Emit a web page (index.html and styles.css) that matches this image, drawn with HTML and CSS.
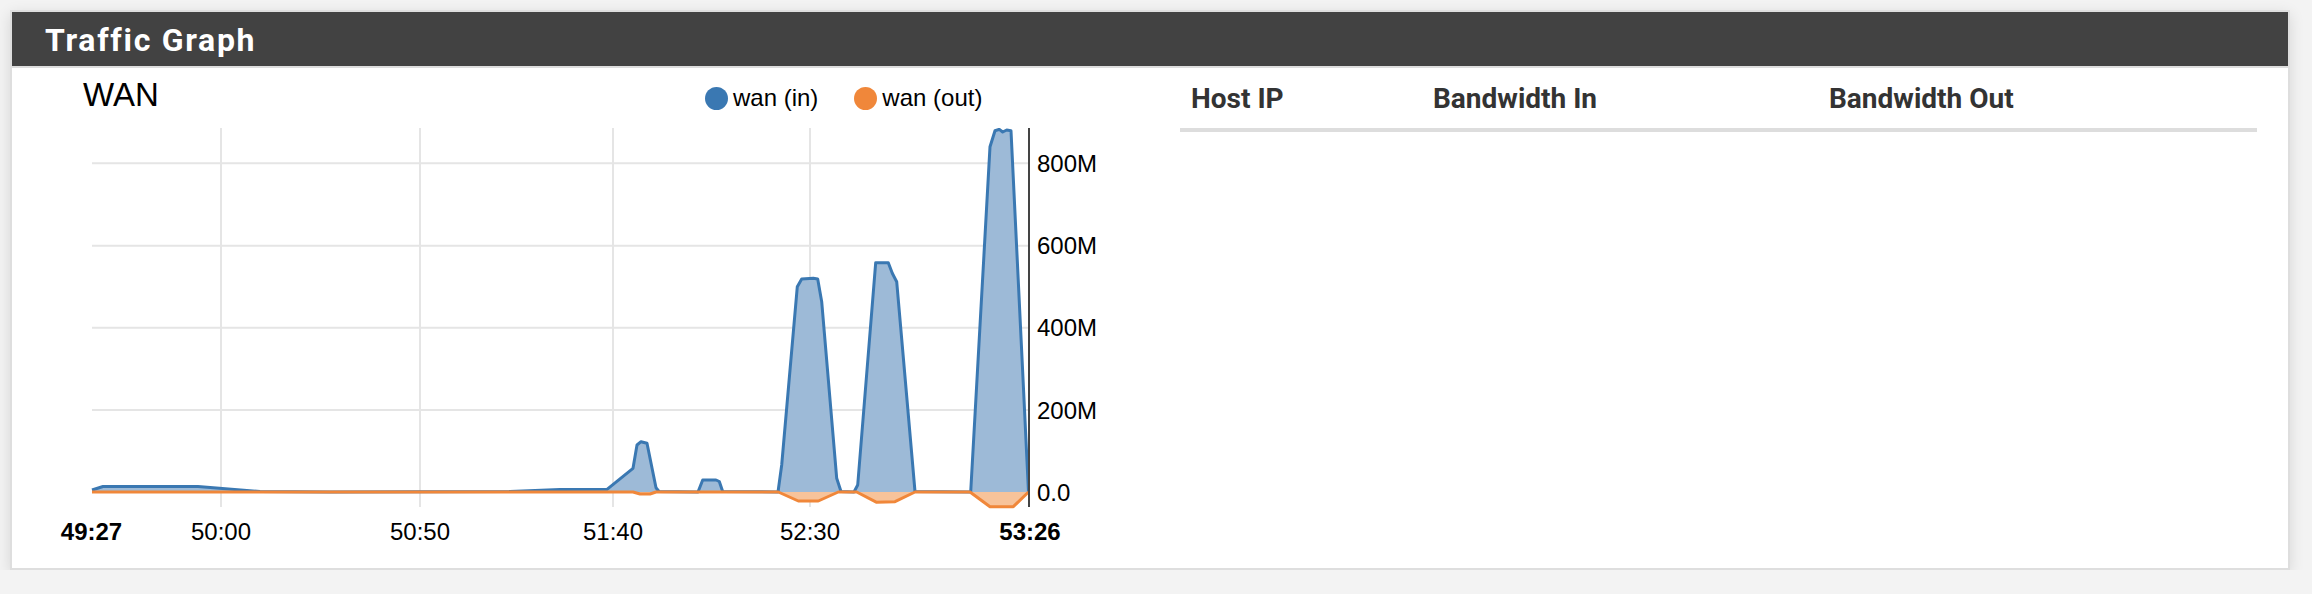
FILE: index.html
```html
<!DOCTYPE html>
<html lang="en">
<head>
<meta charset="utf-8">
<title>Traffic Graph</title>
<link rel="stylesheet" href="styles.css">
</head>
<body>
<div class="panel">
  <div class="panel-heading">
    <h2 class="panel-title">Traffic Graph</h2>
  </div>
  <div class="panel-body">
    <div class="chart-col">
      <div class="chart-head">
        <div class="chart-title">WAN</div>
        <div class="legend">
          <span class="legend-item"><span class="dot dot-in"></span>wan (in)</span>
          <span class="legend-item"><span class="dot dot-out"></span>wan (out)</span>
        </div>
      </div>
      <svg class="chart" width="1168" height="440" viewBox="12 128 1168 440" xmlns="http://www.w3.org/2000/svg">
        <g class="grid">
          <line x1="221" y1="128" x2="221" y2="507"/>
          <line x1="420" y1="128" x2="420" y2="507"/>
          <line x1="613" y1="128" x2="613" y2="507"/>
          <line x1="810" y1="128" x2="810" y2="507"/>
          <line x1="92" y1="163.3" x2="1029" y2="163.3"/>
          <line x1="92" y1="245.7" x2="1029" y2="245.7"/>
          <line x1="92" y1="327.7" x2="1029" y2="327.7"/>
          <line x1="92" y1="410" x2="1029" y2="410"/>
        </g>
        <path class="area-in" d="M92,492 L92,490 L103,486.5 L198,486.5 L260,491.5 L330,492 L510,491.5 L560,489.5 L607,489.3 L633,468.3 L637,445 L641,441.7 L647,443.3 L656,487.7 L659,491.5 L698,492 L702.7,480 L716,480 L719.3,481.5 L722.7,491.5 L778,492 L781.7,465 L797.3,286.7 L801.7,279 L813.3,278.3 L817.7,279 L821.7,301.7 L836.7,478.3 L841,491.5 L854,492 L857.7,485 L875.7,262.7 L888.3,262.7 L892.3,273.3 L896.7,281.7 L915,491.5 L970.7,492 L990,146.7 L995,130.7 L999.3,129.3 L1002.7,132 L1006.7,130 L1011,130.7 L1028.5,492 Z"/>
        <path class="line-in" d="M92,490 L103,486.5 L198,486.5 L260,491.5 L330,492 L510,491.5 L560,489.5 L607,489.3 L633,468.3 L637,445 L641,441.7 L647,443.3 L656,487.7 L659,491.5 L698,492 L702.7,480 L716,480 L719.3,481.5 L722.7,491.5 L778,492 L781.7,465 L797.3,286.7 L801.7,279 L813.3,278.3 L817.7,279 L821.7,301.7 L836.7,478.3 L841,491.5 L854,492 L857.7,485 L875.7,262.7 L888.3,262.7 L892.3,273.3 L896.7,281.7 L915,491.5 L970.7,492 L990,146.7 L995,130.7 L999.3,129.3 L1002.7,132 L1006.7,130 L1011,130.7 L1028.5,492"/>
        <path class="area-out" d="M92,492 L633,492 L640,494 L650,494 L656,492 L778.3,492 L798.3,501 L818.3,501 L838.3,492 L856.7,492 L876.7,502.3 L895,501.7 L915,492 L970,492 L990,506.7 L1013.3,506.7 L1028.5,492 Z"/>
        <path class="line-out" d="M92,492 L633,492 L640,494 L650,494 L656,492 L778.3,492 L798.3,501 L818.3,501 L838.3,492 L856.7,492 L876.7,502.3 L895,501.7 L915,492 L970,492 L990,506.7 L1013.3,506.7 L1028.5,492"/>
        <line class="axis" x1="1029" y1="128" x2="1029" y2="507"/>
        <g class="ticks">
          <text x="1037" y="171.9">800M</text>
          <text x="1037" y="254.3">600M</text>
          <text x="1037" y="336.3">400M</text>
          <text x="1037" y="418.6">200M</text>
          <text x="1037" y="500.6">0.0</text>
        </g>
        <g class="xticks">
          <text class="edge" x="91.5" y="540">49:27</text>
          <text x="221" y="540">50:00</text>
          <text x="420" y="540">50:50</text>
          <text x="613" y="540">51:40</text>
          <text x="810" y="540">52:30</text>
          <text class="edge" x="1030" y="540">53:26</text>
        </g>
      </svg>
    </div>
    <div class="table-col">
      <table class="hosts">
        <colgroup>
          <col class="c-ip">
          <col class="c-in">
          <col class="c-out">
        </colgroup>
        <thead>
          <tr><th>Host IP</th><th>Bandwidth In</th><th>Bandwidth Out</th></tr>
        </thead>
        <tbody></tbody>
      </table>
    </div>
  </div>
</div>
</body>
</html>
```
FILE: styles.css
```css
* { box-sizing: border-box; }

body {
  margin: 0;
  padding: 10px 22px 0 10px;
  background: #f3f3f3;
  font-family: "Liberation Sans", Arial, sans-serif;
}

.panel {
  background: #fff;
  border: 2px solid #dedede;
  box-shadow: 0 4px 14px rgba(0, 0, 0, 0.12);
}

.panel-heading {
  height: 56px;
  background: #424242;
  border-bottom: 2px solid #dddddd;
  display: flex;
  align-items: center;
  padding: 1px 0 0 33px;
}

.panel-title {
  margin: 0;
  font: 700 32px/32px Roboto, "Noto Sans", sans-serif;
  letter-spacing: 1.7px;
  color: #fff;
}

.panel-body {
  display: flex;
  height: 500px;
}

.chart-col {
  width: 1168px;
  flex: none;
}

.chart-head {
  display: grid;
  grid-template-columns: 693px auto;
  height: 60px;
}

.chart-title {
  padding: 10px 0 0 71px;
  font: 33px/33px "Liberation Sans", Arial, sans-serif;
  color: #000;
}

.legend {
  display: flex;
  gap: 36px;
  margin-top: 18px;
  height: 24px;
  font: 24px/24px "Liberation Sans", Arial, sans-serif;
  color: #000;
}

.legend-item {
  display: flex;
  align-items: center;
  gap: 5px;
}

.dot {
  width: 23px;
  height: 23px;
  border-radius: 50%;
}

.dot-in { background: #3a78b2; }
.dot-out { background: #f0873a; }

.chart {
  display: block;
  font-family: "Liberation Sans", Arial, sans-serif;
}

.grid line {
  stroke: #e5e5e5;
  stroke-width: 2;
}

.area-in { fill: #9dbad7; stroke: none; }
.line-in { fill: none; stroke: #3a78b2; stroke-width: 3; stroke-linejoin: round; }
.area-out { fill: #f7c39a; stroke: none; }
.line-out { fill: none; stroke: #f0873a; stroke-width: 3; stroke-linejoin: round; }

.axis {
  stroke: #444;
  stroke-width: 2;
}

.ticks text {
  font-size: 24px;
  fill: #000;
}

.xticks text {
  font-size: 24px;
  fill: #000;
  text-anchor: middle;
}

.xticks .edge { font-weight: 700; }

.table-col {
  width: 1077px;
  flex: none;
}

.hosts {
  width: 1077px;
  border-collapse: collapse;
  table-layout: fixed;
}

.c-ip { width: 242px; }
.c-in { width: 396px; }
.c-out { width: 439px; }

.hosts th {
  text-align: left;
  padding: 14px 11px 12px;
  font: 700 28px/34px Roboto, "Noto Sans", sans-serif;
  color: #333;
  border-bottom: 4px solid #dddddd;
}
```
